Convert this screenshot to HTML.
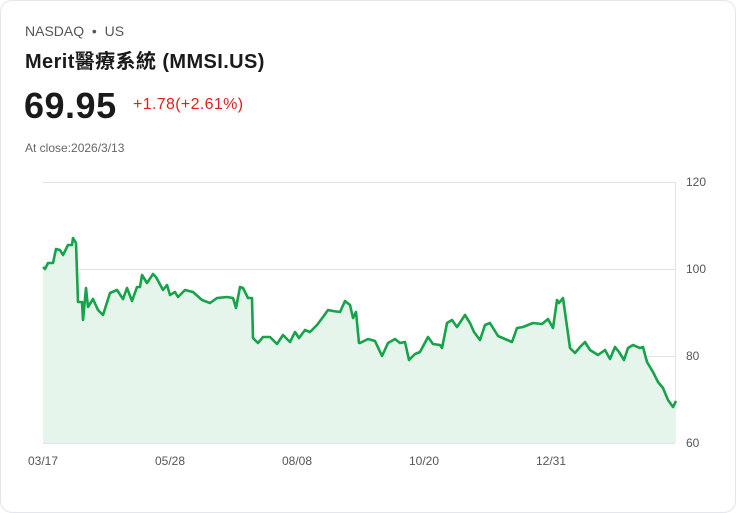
<!DOCTYPE html>
<html><head><meta charset="utf-8"><style>
html,body{margin:0;padding:0;background:#fff;}
body{width:736px;height:513px;position:relative;overflow:hidden;font-family:"Liberation Sans","Noto Sans CJK TC",sans-serif;}
.card{position:absolute;left:0;top:0;width:734px;height:511px;border:1px solid #e2e6ee;border-radius:12px;}
.t{position:absolute;white-space:nowrap;}
</style></head><body>
<div class="card"></div>
<div class="t" style="left:25px;top:23px;font-size:14px;color:#555;">NASDAQ &nbsp;•&nbsp; US</div>
<div class="t" style="left:25px;top:45px;font-size:20px;font-weight:bold;color:#1a1a1a;letter-spacing:0.4px;">Merit醫療系統 (MMSI.US)</div>
<div class="t" style="left:24px;top:85px;font-size:36px;font-weight:bold;color:#1a1a1a;letter-spacing:0.5px;">69.95</div>
<div class="t" style="left:133px;top:96px;font-size:16px;color:#e02020;letter-spacing:0.35px;">+1.78(+2.61%)</div>
<div class="t" style="left:25px;top:141px;font-size:12px;color:#666;">At close:2026/3/13</div>
<svg width="736" height="513" style="position:absolute;left:0;top:0">
<g stroke="#e3e3e3" stroke-width="1">
<line x1="43" y1="182.5" x2="675" y2="182.5"/><line x1="43" y1="269.5" x2="675" y2="269.5"/>
<line x1="43" y1="356.5" x2="675" y2="356.5"/><line x1="43" y1="443.5" x2="675" y2="443.5"/>
<line x1="675.5" y1="182" x2="675.5" y2="443"/>
</g>
<g font-family="Liberation Sans, sans-serif" font-size="12" fill="#555">
<text x="686" y="186">120</text><text x="686" y="273">100</text><text x="686" y="360">80</text><text x="686" y="447">60</text>
<text x="28" y="465">03/17</text><text x="155" y="465">05/28</text><text x="282" y="465">08/08</text><text x="409" y="465">10/20</text><text x="536" y="465">12/31</text>
</g>
<path fill="#e6f5ec" d="M43,267 L45,269 48,263 53,263 56,249 60,250 63,255 68,245 72,245 73,238 76,243 78,302 82,302 83,320 86,288 88,307 93,299 98,310 103,315 110,293 117,290 123,299 127,288 132,301 137,287 140,287 142,275 147,283 153,274 156,277 163,290 167,285 170,295 175,292 178,297 185,290 193,292 202,300 210,303 217,298 227,297 233,298 236,308 240,287 243,288 248,298 252,298 253,338 258,343 263,337 270,337 277,344 283,335 290,342 295,332 299,338 305,330 310,332 317,325 323,317 328,310 333,311 340,312 345,301 350,305 353,318 356,312 359,343 360,343 368,339 375,341 382,356 388,343 395,339 400,343 405,342 409,360 415,354 420,352 428,337 433,344 440,345 442,348 447,323 452,320 457,327 465,315 470,323 474,332 480,340 485,325 490,323 498,336 505,339 512,342 517,328 523,327 533,323 542,324 548,319 553,328 557,300 559,303 563,298 570,348 575,353 580,347 585,342 590,350 598,355 605,350 610,359 615,347 619,352 624,360 628,348 633,345 640,348 643,347 647,362 653,372 658,382 663,388 668,400 673,407 676,401 L676,443 L43,443 Z"/>
<path fill="none" stroke="#16a34a" stroke-width="2.6" stroke-linejoin="round" d="M43,267 L45,269 48,263 53,263 56,249 60,250 63,255 68,245 72,245 73,238 76,243 78,302 82,302 83,320 86,288 88,307 93,299 98,310 103,315 110,293 117,290 123,299 127,288 132,301 137,287 140,287 142,275 147,283 153,274 156,277 163,290 167,285 170,295 175,292 178,297 185,290 193,292 202,300 210,303 217,298 227,297 233,298 236,308 240,287 243,288 248,298 252,298 253,338 258,343 263,337 270,337 277,344 283,335 290,342 295,332 299,338 305,330 310,332 317,325 323,317 328,310 333,311 340,312 345,301 350,305 353,318 356,312 359,343 360,343 368,339 375,341 382,356 388,343 395,339 400,343 405,342 409,360 415,354 420,352 428,337 433,344 440,345 442,348 447,323 452,320 457,327 465,315 470,323 474,332 480,340 485,325 490,323 498,336 505,339 512,342 517,328 523,327 533,323 542,324 548,319 553,328 557,300 559,303 563,298 570,348 575,353 580,347 585,342 590,350 598,355 605,350 610,359 615,347 619,352 624,360 628,348 633,345 640,348 643,347 647,362 653,372 658,382 663,388 668,400 673,407 676,401"/>
</svg>
</body></html>
